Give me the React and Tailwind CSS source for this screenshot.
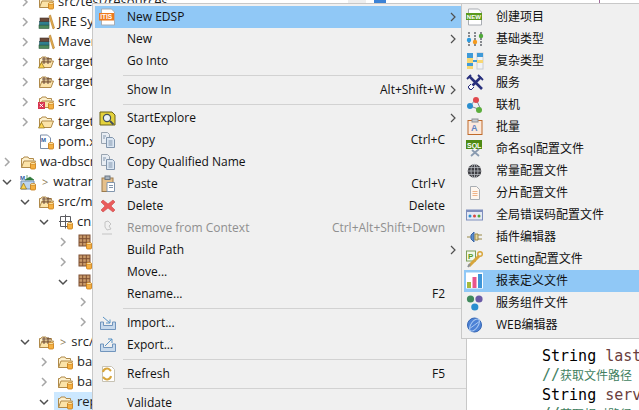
const uiFont = { fontFamily: '"Open Sans", "Noto Sans CJK SC", sans-serif' }

function Jar({ x = 10, y = 9 }) {
  return (
    <g transform={`translate(${x} ${y})`}>
      <rect x="0.5" y="1" width="5" height="6" rx="1" fill="#f5b041" stroke="#c77a12" strokeWidth="0.8" />
      <ellipse cx="3" cy="1.5" rx="2.5" ry="1" fill="#fde9b0" stroke="#c77a12" strokeWidth="0.6" />
    </g>
  )
}

function OpenFolder({ grid, warn, jar = true, err }) {
  return (
    <svg width="17" height="16" viewBox="0 0 17 16" className="flex-none">
      <path d="M1.5 13.5V4.5h1.5l1-1.5h4l1 1.5h4.5v2" fill="#fdf0cd" stroke="#b08a4a" />
      <path d="M1.5 13.5l2.5-6.5h11.5l-2.5 6.5z" fill="#fbe3a8" stroke="#b08a4a" />
      {grid && <path d="M6 3v7M10 3v7M4 5h9M4 8h9" stroke="#6d4a35" strokeWidth="1" fill="none" />}
      {warn && <path d="M3.5 8.5l3 5.5h-6z" fill="#fcd34d" stroke="#8a6d1a" strokeWidth="0.7" />}
      {err && <rect x="0" y="8" width="7" height="7" fill="#d8344f" />}
      {err && <path d="M1.7 9.7l3.4 3.4M5.1 9.7l-3.4 3.4" stroke="#fff" strokeWidth="1" />}
      {jar && <Jar x={10} y={8} />}
    </svg>
  )
}

function Books() {
  return (
    <svg width="17" height="16" viewBox="0 0 17 16" className="flex-none">
      <rect x="1" y="11" width="10" height="3.5" fill="#4d8a5c" stroke="#2e5b3c" strokeWidth="0.6" />
      <rect x="1.5" y="7.5" width="9.5" height="3.5" fill="#2f7f8e" stroke="#25565f" strokeWidth="0.6" />
      <rect x="2" y="4" width="9" height="3.5" fill="#6b4a3a" stroke="#42302a" strokeWidth="0.6" />
      <path d="M11 2l1.5-1 4 13-1.5 1z" fill="#eab04c" stroke="#a8752a" strokeWidth="0.6" />
    </svg>
  )
}

function PomFile() {
  return (
    <svg width="17" height="16" viewBox="0 0 17 16" className="flex-none">
      <path d="M2.5 1h7l3 3v10.5h-10z" fill="#fff" stroke="#7d8ea8" />
      <text x="3" y="8" fontSize="6" fontWeight="700" fill="#2d5a9e" fontFamily="Liberation Sans">M</text>
      <Jar x={10} y={8} />
    </svg>
  )
}

function ProjectIcon() {
  return (
    <svg width="17" height="17" viewBox="0 0 17 17" className="flex-none">
      <text x="0" y="6" fontSize="6" fontWeight="700" fill="#2d5a9e" fontFamily="Liberation Sans">M</text>
      <path d="M7 6V1M5 6l5-3 4 3z" fill="#2f7a3c" stroke="#2f7a3c" strokeWidth="0.7" />
      <path d="M1 7h13v8H1z" fill="#bcd4ee" stroke="#7390b3" />
      <path d="M3.5 9l3 6h-6z" fill="#fcd34d" stroke="#8a6d1a" strokeWidth="0.7" />
      <Jar x={10} y={9} />
    </svg>
  )
}

function PackageIcon({ outline }) {
  return (
    <svg width="17" height="16" viewBox="-2 0 17 16" className="flex-none">
      {outline ? (
        <path d="M1.5 2.5h10v10h-10zM6.5 0.5v14M0 7.5h13" fill="none" stroke="#5b5b60" />
      ) : (
        <>
          <rect x="1" y="1" width="11" height="11" fill="#c99a6a" stroke="#7d4f33" />
          <path d="M4.7 1v11M8.3 1v11M1 4.7h11M1 8.3h11" stroke="#7d4f33" />
        </>
      )}
      <Jar x={8} y={8} />
    </svg>
  )
}

function Chevron({ open, dark, className = '' }) {
  const stroke = open || dark ? '#4f4f4f' : '#a6a6a6'
  return (
    <svg width="10" height="10" viewBox="0 0 10 10" className={`flex-none ${className}`}>
      <path d={open ? 'M1 3l4 4 4-4' : 'M3 1l4 4-4 4'} fill="none" stroke={stroke} strokeWidth="1.5" />
    </svg>
  )
}

function TreeRow({ indent, chevron, icon, marker, label, selected }) {
  return (
    <div className="h-5 flex items-center text-[13px] text-[#1e1e1e] whitespace-nowrap" style={{ paddingLeft: indent }}>
      {chevron ? <Chevron open={chevron === 'open'} /> : <span className="w-[10px] flex-none" />}
      <div className={`flex items-center h-5 ml-[5px] pl-[3px] w-[200px] ${selected ? 'bg-[#cce8ff]' : ''}`}>
        {icon}
        {marker && <span className="ml-[5px] text-[11px] text-[#8a7a55]">&gt;</span>}
        <span className={marker ? 'ml-[5px]' : 'ml-[3px]'}>{label}</span>
      </div>
    </div>
  )
}

const treeRows = [
  { indent: 20, chevron: 'closed', icon: <OpenFolder />, label: 'src/test/resources' },
  { indent: 20, chevron: 'closed', icon: <Books />, label: 'JRE System' },
  { indent: 20, chevron: 'closed', icon: <Books />, label: 'Maven' },
  { indent: 20, chevron: 'closed', icon: <OpenFolder grid warn jar={false} />, label: 'target' },
  { indent: 20, chevron: 'closed', icon: <OpenFolder grid jar={false} />, label: 'target' },
  { indent: 20, chevron: 'closed', icon: <OpenFolder err />, label: 'src' },
  { indent: 20, chevron: 'closed', icon: <OpenFolder warn jar={false} />, label: 'target' },
  { indent: 20, icon: <PomFile />, label: 'pom.x' },
  { indent: 2, chevron: 'closed', icon: <OpenFolder />, label: 'wa-dbscr' },
  { indent: 2, chevron: 'open', icon: <ProjectIcon />, marker: true, label: 'watran' },
  { indent: 20, chevron: 'open', icon: <OpenFolder grid />, label: 'src/m' },
  { indent: 39, chevron: 'open', icon: <PackageIcon outline />, label: 'cn.' },
  { indent: 58, chevron: 'closed', icon: <PackageIcon /> },
  { indent: 58, chevron: 'closed', icon: <PackageIcon /> },
  { indent: 58, chevron: 'open', icon: <PackageIcon /> },
  { indent: 78, chevron: 'closed' },
  { indent: 78, chevron: 'closed' },
  { indent: 20, chevron: 'open', icon: <OpenFolder grid />, marker: true, label: 'src/' },
  { indent: 39, chevron: 'closed', icon: <OpenFolder />, label: 'ba' },
  { indent: 39, chevron: 'closed', icon: <OpenFolder />, label: 'ba' },
  { indent: 39, chevron: 'open', icon: <OpenFolder />, label: 'rep', selected: true },
]

function Glyph({ children, w = 18, h = 18 }) {
  return <svg width={w} height={h} viewBox="0 0 18 18">{children}</svg>
}

const DocFrame = ({ fill = '#fff' }) => <path d="M2.5 1h10l3 3v13h-13z" fill={fill} stroke="#a9adb3" />

const icons = {
  its: (
    <Glyph>
      <DocFrame />
      <rect x="0" y="5" width="15" height="7.5" fill="#ee7a1f" />
      <text x="1.2" y="11" fontSize="6.5" fontWeight="700" fill="#fff" fontFamily="Liberation Sans">ITIS</text>
    </Glyph>
  ),
  search: (
    <Glyph>
      <path d="M1 3h12l3 3v10H1z" fill="#e4d23c" stroke="#6d6216" />
      <circle cx="8" cy="9" r="3.6" fill="#e9f2f7" stroke="#44505a" strokeWidth="1.2" />
      <path d="M11 12l3.5 3.5" stroke="#44505a" strokeWidth="1.8" />
    </Glyph>
  ),
  copy: (
    <Glyph>
      <path d="M2.5 1.5h6l2 2v9h-8z" fill="#e8edf3" stroke="#9aa5b1" />
      <path d="M7.5 6.5h6l2 2v8h-8z" fill="#dbe6f2" stroke="#8296ad" />
      <path d="M9.5 10h4M9.5 12h4M9.5 14h4M4 5h3M4 7h2" stroke="#8296ad" />
    </Glyph>
  ),
  paste: (
    <Glyph>
      <rect x="3" y="3" width="11" height="13.5" fill="#e5c08b" stroke="#9a7b4f" />
      <rect x="6" y="1" width="5" height="3.5" fill="#a8b4c0" stroke="#6b7783" />
      <path d="M8 7.5h7.5v9H8z" fill="#fff" stroke="#8296ad" />
      <path d="M10 10.5h4M10 12.5h4" stroke="#8296ad" />
    </Glyph>
  ),
  del: (
    <Glyph>
      <path d="M4 3l5 4 5-4 2 2-4 4 4 4-2 2-5-4-5 4-2-2 4-4-4-4z" fill="#ea5b5b" stroke="#c94a4a" strokeWidth="0.6" />
    </Glyph>
  ),
  remove: (
    <Glyph>
      <path d="M6 3l3-1 3 3-2 2 2 3-4 1-2-3zM3 15h10" fill="none" stroke="#c4c4c4" />
    </Glyph>
  ),
  importIcon: (
    <Glyph>
      <path d="M1.5 8v7.5h15V8h-3v3.5h-9V8z" fill="#c7d9ec" stroke="#7195bd" />
      <path d="M4 3l7 6M11 5.5V9H7" fill="none" stroke="#5a93c4" />
    </Glyph>
  ),
  exportIcon: (
    <Glyph>
      <path d="M1.5 8v7.5h15V8h-3v3.5h-9V8z" fill="#c7d9ec" stroke="#7195bd" />
      <path d="M6 10l7-7M9 3h4v4" fill="none" stroke="#5a93c4" />
    </Glyph>
  ),
  refresh: (
    <Glyph>
      <path d="M3.5 1.5h9l3 3v12h-12z" fill="#fff" stroke="#c7c2b4" />
      <path d="M4 7a4 4 0 0 1 7-2l1 1M12 11a4 4 0 0 1-7 2l-1-1" fill="none" stroke="#d8a53a" strokeWidth="2" />
    </Glyph>
  ),
  newFile: (
    <Glyph>
      <DocFrame />
      <rect x="0" y="5" width="16" height="7" fill="#5b9a1d" />
      <text x="0.8" y="11" fontSize="6" fontWeight="700" fill="#fff" fontFamily="Liberation Sans">NEW</text>
    </Glyph>
  ),
  sliders: (
    <Glyph>
      <path d="M3 2v14M9 2v14M15 2v14" stroke="#6b6f76" strokeWidth="1.6" strokeDasharray="2 1" />
      <circle cx="3" cy="10" r="2.2" fill="#2b9be0" />
      <circle cx="9" cy="12" r="2.2" fill="#f39a1e" />
      <circle cx="15" cy="6" r="2.2" fill="#4fa83a" />
    </Glyph>
  ),
  complex: (
    <Glyph>
      <rect x="1" y="1" width="6" height="16" fill="#f7d774" />
      <rect x="1" y="1" width="6" height="5" fill="#3f9ad8" />
      <rect x="1" y="11" width="6" height="3" fill="#3f9ad8" />
      <rect x="11" y="1" width="6" height="16" fill="#f1f3f5" stroke="#c8ccd2" />
      <rect x="11" y="1" width="6" height="4" fill="#3f9ad8" />
      <rect x="11" y="8" width="6" height="3" fill="#f7d774" />
      <path d="M7 9h4" stroke="#3f9ad8" strokeWidth="2" />
    </Glyph>
  ),
  tools: (
    <Glyph>
      <path d="M3 2l13 13M15 3L3 15" stroke="#29307d" strokeWidth="2.6" />
      <path d="M1 5l4-4M12 1l5 5" stroke="#29307d" strokeWidth="1.8" fill="none" />
      <path d="M5 10l-3 3 3 3 3-3" fill="#fff" stroke="#29307d" />
    </Glyph>
  ),
  online: (
    <Glyph>
      <path d="M4 10l6-7 5 11z" fill="none" stroke="#7a8aa0" />
      <circle cx="10" cy="4" r="3" fill="#e0484d" />
      <circle cx="4" cy="10" r="3" fill="#2a8ecf" />
      <circle cx="13" cy="14" r="3" fill="#5cae3c" />
    </Glyph>
  ),
  batch: (
    <Glyph>
      <rect x="2" y="2.5" width="14" height="14" fill="#fbe9dc" stroke="#c06a2a" />
      <rect x="6" y="1" width="6" height="3" fill="#c9ccd1" stroke="#8c9096" />
      <text x="5" y="13" fontSize="9" fontWeight="700" fill="#5f84c5" fontFamily="Liberation Sans">A</text>
    </Glyph>
  ),
  sql: (
    <Glyph>
      <rect x="0" y="0" width="16" height="9" fill="#4e8a14" />
      <text x="1" y="7.5" fontSize="7" fontWeight="700" fill="#fff" fontFamily="Liberation Sans">SQL</text>
      <path d="M5 16l8-7M6 10l7 6" stroke="#8a9bb0" strokeWidth="1.8" />
    </Glyph>
  ),
  globe: (
    <Glyph>
      <circle cx="8.5" cy="9" r="6.8" fill="#3d3d42" />
      <path d="M2 9h13M3 5.5h11M3 12.5h11M8.5 2v14" stroke="#b9bcc2" strokeWidth="0.8" />
      <ellipse cx="8.5" cy="9" rx="3.5" ry="6.8" fill="none" stroke="#b9bcc2" strokeWidth="0.8" />
    </Glyph>
  ),
  page: (
    <Glyph>
      <path d="M4.5 2.5h6l3 3v10h-9z" fill="#fdf6ef" stroke="#a8adb3" />
      <path d="M6.5 7.5h5M6.5 9.5h5M6.5 11.5h5" stroke="#eeb388" />
    </Glyph>
  ),
  errorCode: (
    <Glyph>
      <rect x="0.5" y="4" width="16" height="10" fill="#e5e9f4" stroke="#7e8fbd" />
      <rect x="0.5" y="4" width="16" height="2" fill="#7e8fbd" />
      <circle cx="4" cy="10" r="1.5" fill="#2a8ecf" />
      <circle cx="8.5" cy="10" r="1.5" fill="#d9473f" />
      <circle cx="13" cy="10" r="1.5" fill="#4fa83a" />
    </Glyph>
  ),
  plugin: (
    <Glyph>
      <path d="M1 9h5M11 7h5M11 11h5" stroke="#9a8a4a" />
      <path d="M5 7l3-3v10l-3-3z" fill="#5a8ed0" stroke="#3a65a3" />
      <path d="M9 6h3v6H9z" fill="#e9d79a" stroke="#9a8a4a" />
    </Glyph>
  ),
  setting: (
    <Glyph>
      <rect x="0.5" y="1" width="9" height="10" fill="#f1f7ea" stroke="#7e9e5a" />
      <text x="2" y="9" fontSize="8" fontWeight="700" fill="#5b9a1d" fontFamily="Liberation Sans">P</text>
      <path d="M3 16l10-10" stroke="#d8a53a" strokeWidth="3" />
      <circle cx="14" cy="4" r="2.3" fill="none" stroke="#d8a53a" strokeWidth="1.4" />
      <path d="M2 17l2-3" stroke="#8c9096" strokeWidth="2" />
    </Glyph>
  ),
  report: (
    <Glyph>
      <rect x="0" y="0.5" width="17" height="16" fill="#fff" />
      <rect x="1" y="10" width="4" height="6" fill="#a6ba3c" />
      <rect x="6.5" y="5" width="4" height="11" fill="#e8548c" />
      <rect x="12" y="2" width="4" height="14" fill="#3d95d8" />
    </Glyph>
  ),
  parts: (
    <Glyph>
      <circle cx="4.5" cy="5" r="3.6" fill="#3f8a5d" />
      <circle cx="13" cy="5" r="3.6" fill="#6a5aa6" />
      <circle cx="8.8" cy="13" r="3.6" fill="#2a8ecf" />
    </Glyph>
  ),
  web: (
    <Glyph>
      <circle cx="8.5" cy="9" r="7" fill="#4d82d6" stroke="#3566b3" />
      <ellipse cx="8.5" cy="9" rx="3.5" ry="7" fill="none" stroke="#a9c8f2" transform="rotate(35 8.5 9)" />
      <path d="M3 13l11-8" stroke="#a9c8f2" />
    </Glyph>
  ),
}

function MenuChevron() {
  return (
    <svg width="6" height="10" viewBox="0 0 6 10" className="flex-none">
      <path d="M1 1l4 4-4 4" fill="none" stroke="#505050" strokeWidth="1.2" />
    </svg>
  )
}

function MenuItem({ icon, label, shortcut, arrow, active, disabled }) {
  return (
    <div className={`h-[22px] flex items-center ml-[2px] pl-[4px] pr-[10px] ${active ? 'bg-[#90c8f6]' : ''}`}>
      <span className="w-[28px] flex-none flex items-center">{icon}</span>
      <span className={`flex-1 ${disabled ? 'text-[#8f8f8f]' : 'text-[#111]'}`}>{label}</span>
      {shortcut && <span className={`mr-[5px] ${disabled ? 'text-[#8f8f8f]' : 'text-[#111]'}`}>{shortcut}</span>}
      <span className="w-[6px] flex-none flex">{arrow && <MenuChevron />}</span>
    </div>
  )
}

function Sep({ h }) {
  return (
    <div className={`flex items-center pl-[30px] ${h}`}>
      <div className="h-px w-full bg-[#d2d2d2]" />
    </div>
  )
}

function SubItem({ icon, label, arrow, active }) {
  return (
    <div className={`h-[22px] flex items-center ml-[2px] pl-[2px] pr-[5px] ${active ? 'bg-[#90c8f6]' : ''}`}>
      <span className="w-[30px] flex-none flex items-center">{icon}</span>
      <span className="flex-1 text-[#111]">{label}</span>
      {arrow && <MenuChevron />}
    </div>
  )
}

const subItems = [
  { icon: icons.newFile, label: '创建项目', arrow: true },
  { icon: icons.sliders, label: '基础类型', arrow: true },
  { icon: icons.complex, label: '复杂类型', arrow: true },
  { icon: icons.tools, label: '服务', arrow: true },
  { icon: icons.online, label: '联机', arrow: true },
  { icon: icons.batch, label: '批量', arrow: true },
  { icon: icons.sql, label: '命名sql配置文件' },
  { icon: icons.globe, label: '常量配置文件' },
  { icon: icons.page, label: '分片配置文件' },
  { icon: icons.errorCode, label: '全局错误码配置文件' },
  { icon: icons.plugin, label: '插件编辑器' },
  { icon: icons.setting, label: 'Setting配置文件' },
  { icon: icons.report, label: '报表定义文件', active: true },
  { icon: icons.parts, label: '服务组件文件' },
  { icon: icons.web, label: 'WEB编辑器', arrow: true },
]

export default function App() {
  return (
    <div className="relative w-[639px] h-[410px] overflow-hidden bg-white flex" style={uiFont}>
      <div className="w-[340px] flex-none -mt-2">
        {treeRows.map((row, i) => (
          <TreeRow key={i} {...row} />
        ))}
      </div>

      <div className="flex-1">
        <div className="h-[3px] flex">
          <div className="ml-[8px] w-[18px] bg-[#eeeeee]" />
          <div className="ml-[8px] w-[12px] bg-[#3b82d6]" />
          <div className="ml-[213px] w-px bg-[#a06a9a]" />
        </div>
        <div className="pl-[202px] pt-[344px] text-[15px] leading-[19px] whitespace-pre text-black" style={{ fontFamily: '"DejaVu Sans Mono", "Noto Sans CJK SC", monospace' }}>
          <div>String <span className="text-[#6a3e3e]">last</span></div>
          <div className="text-[#3f7f5f]">//<span className="text-[12px]">获取文件路径</span></div>
          <div>String <span className="text-[#6a3e3e]">serv</span></div>
          <div className="text-[#3f7f5f]">//<span className="text-[12px]">获取相对路径</span></div>
        </div>
      </div>

      {/* context menu */}
      <div className="absolute left-[92px] top-[3px] w-[375px] h-[420px] bg-[#f0f0f0] border border-[#c8c8c8] pt-[2px] text-[12px] leading-none">
        <MenuItem icon={icons.its} label="New EDSP" arrow active />
        <MenuItem label="New" arrow />
        <MenuItem label="Go Into" />
        <Sep h="h-[7px]" />
        <MenuItem label="Show In" shortcut="Alt+Shift+W" arrow />
        <Sep h="h-[6px]" />
        <MenuItem icon={icons.search} label="StartExplore" arrow />
        <MenuItem icon={icons.copy} label="Copy" shortcut="Ctrl+C" />
        <MenuItem icon={icons.copy} label="Copy Qualified Name" />
        <MenuItem icon={icons.paste} label="Paste" shortcut="Ctrl+V" />
        <MenuItem icon={icons.del} label="Delete" shortcut="Delete" />
        <MenuItem icon={icons.remove} label="Remove from Context" shortcut="Ctrl+Alt+Shift+Down" disabled />
        <MenuItem label="Build Path" arrow />
        <MenuItem label="Move..." />
        <MenuItem label="Rename..." shortcut="F2" />
        <Sep h="h-[7px]" />
        <MenuItem icon={icons.importIcon} label="Import..." />
        <MenuItem icon={icons.exportIcon} label="Export..." />
        <Sep h="h-[7px]" />
        <MenuItem icon={icons.refresh} label="Refresh" shortcut="F5" />
        <Sep h="h-[7px]" />
        <MenuItem label="Validate" />
      </div>

      {/* submenu */}
      <div className="absolute left-[461px] top-[3px] w-[190px] h-[336px] bg-[#f0f0f0] border border-[#c8c8c8] pt-[2px] text-[12px] leading-none">
        {subItems.map((item) => (
          <SubItem key={item.label} {...item} />
        ))}
      </div>
    </div>
  )
}
